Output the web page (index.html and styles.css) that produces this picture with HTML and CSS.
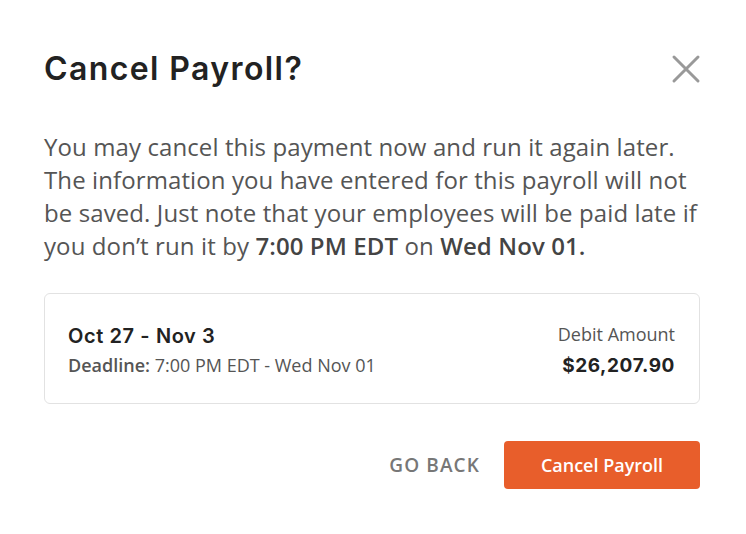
FILE: index.html
```html
<!DOCTYPE html>
<html>
<head>
  <meta charset="UTF-8">
  <title>Cancel Payroll</title>
  <link rel="stylesheet" href="styles.css">
</head>
<body>
  <div class="dialog">
    <div class="dialog-head">
      <h1 class="dialog-title">Cancel Payroll?</h1>
      <button class="close" aria-label="Close">
        <svg width="30" height="30" viewBox="0 0 30 30">
          <path d="M3 3 L27 27 M27 3 L3 27" stroke="#999" stroke-width="3" stroke-linecap="round" fill="none"/>
        </svg>
      </button>
    </div>

    <p class="message">You may cancel this payment now and run it again later. The information you have entered for this payroll will not be saved. Just note that your employees will be paid late if you don’t run it by <b>7:00 PM EDT</b> on <b>Wed Nov 01.</b></p>

    <div class="card">
      <div class="card-left">
        <div class="period">Oct 27 - Nov 3</div>
        <div class="deadline"><b>Deadline:</b> 7:00 PM EDT - Wed Nov 01</div>
      </div>
      <div class="card-right">
        <div class="amount-label">Debit Amount</div>
        <div class="amount">$26,207.90</div>
      </div>
    </div>

    <div class="actions">
      <button class="btn-back">GO BACK</button>
      <button class="btn-cancel">Cancel Payroll</button>
    </div>
  </div>
</body>
</html>
```

FILE: styles.css
```css
body {
  margin: 0;
  background: #fff;
  font-family: "Open Sans", "Liberation Sans", sans-serif;
}
.dialog {
  padding: 46px 46px 0 44px;
}
.dialog-head {
  display: flex;
  justify-content: space-between;
  align-items: center;
}
.dialog-title {
  margin: 0;
  font-family: Inter, "Open Sans", sans-serif;
  font-size: 32px;
  font-weight: 600;
  line-height: 46px;
  color: #222;
  letter-spacing: 1.4px;
}
.close {
  border: none;
  background: none;
  padding: 0;
  margin-right: -1px;
  width: 30px;
  height: 30px;
  cursor: pointer;
}
.message {
  margin: 38px 0 0;
  font-size: 24px;
  line-height: 33px;
  letter-spacing: 0.1px;
  color: #555;
}
.message b {
  font-weight: 600;
  color: #444;
}
.card {
  margin-top: 31px;
  border: 1px solid #e2e2e2;
  border-radius: 6px;
  padding: 27px 24px 23px 23px;
  display: flex;
  justify-content: space-between;
  align-items: flex-start;
}
.period {
  font-family: Inter, "Open Sans", sans-serif;
  font-size: 20px;
  font-weight: 600;
  color: #222;
  line-height: 30px;
  letter-spacing: 0.6px;
}
.deadline {
  margin-top: 1px;
  font-size: 18px;
  line-height: 26px;
  color: #555;
}
.deadline b {
  font-weight: 600;
}
.card-right {
  text-align: right;
}
.amount-label {
  margin-top: -1px;
  font-size: 18px;
  line-height: 28px;
  color: #555;
}
.amount {
  margin-top: 4px;
  font-family: Inter, "Open Sans", sans-serif;
  font-size: 19px;
  font-weight: 700;
  line-height: 28px;
  letter-spacing: 0.6px;
  color: #222;
}
.actions {
  margin-top: 37px;
  display: flex;
  justify-content: flex-end;
  align-items: center;
  gap: 24px;
}
.btn-back {
  border: none;
  background: none;
  font-family: "Open Sans", sans-serif;
  font-size: 19px;
  font-weight: 600;
  letter-spacing: 1.1px;
  color: #777;
  padding: 0;
}
.btn-cancel {
  border: none;
  background: #e85e2b;
  color: #fff;
  font-family: "Open Sans", sans-serif;
  font-size: 18px;
  font-weight: 600;
  width: 196px;
  height: 48px;
  border-radius: 4px;
}
```
